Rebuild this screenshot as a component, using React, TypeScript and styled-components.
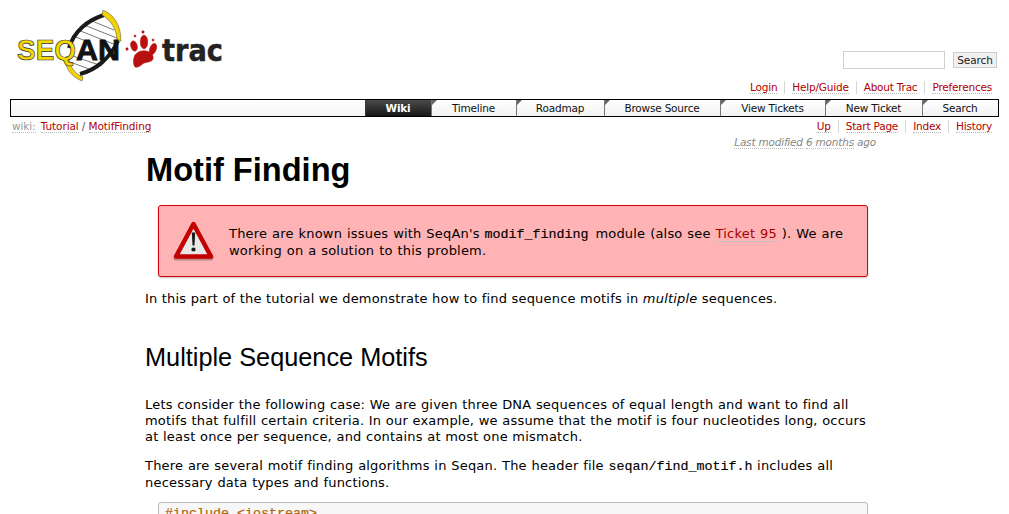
import React, {FC} from "react";
import styled, {createGlobalStyle} from "styled-components";

const GlobalStyle = createGlobalStyle`
  html, body {
    margin: 0;
    height: 514px;
    overflow: hidden;
    background: #fff;
    color: #000;
    font-family: "DejaVu Sans", Verdana, sans-serif;
    font-size: 13px;
  }
`;

const Page = styled.div`
  width: 1009px;
  height: 514px;
  overflow: hidden;
  padding: 0 10px;
  box-sizing: border-box;
`;

const Banner = styled.div`
  display: flex;
  justify-content: space-between;
  height: 51px;
  padding-top: 10px;
  padding-left: 6px;
`;

const SearchRow = styled.form`
  display: flex;
  align-items: center;
  gap: 8px;
  height: 18px;
  margin: 41px 2px 0 0;
`;

const SearchInput = styled.input`
  width: 102px;
  height: 18px;
  box-sizing: border-box;
  border: 1px solid #d0d0d0;
  background: #fff;
  padding: 0;
`;

const SearchButton = styled.button`
  width: 44px;
  height: 16px;
  box-sizing: border-box;
  padding: 0;
  border: 1px solid #ccc;
  background: #f0f0f0;
  color: #222;
  font-family: "DejaVu Sans", Verdana, sans-serif;
  font-size: 10.5px;
  letter-spacing: -0.1px;
  line-height: 14px;
`;

const LinkList = styled.ul`
  display: flex;
  justify-content: flex-end;
  list-style: none;
  margin: 0;
  padding: 0;
  font-size: 10.5px;
  letter-spacing: -0.2px;
  line-height: 13px;
`;

const MetaNav = styled(LinkList)`
  height: 13px;
  margin-top: 20px;
  padding-right: 7px;
`;

const LinkItem = styled.li`
  padding: 0 7px 0 7px;
  border-right: 1px solid #d7d7d7;

  &:last-child {
    border-right: 0;
    padding-right: 0;
  }
`;

const DottedLink = styled.a`
  color: #b00000;
  text-decoration: none;
  border-bottom: 1px dotted #bbb;
`;

const MainNav = styled.nav`
  display: flex;
  justify-content: flex-end;
  height: 18px;
  margin-top: 5px;
  box-sizing: border-box;
  border: 1px solid #000;
  background: linear-gradient(#fff, #f4f4f4);
`;

const Tab = styled.a<{ $width: number; $active?: boolean }>`
  position: relative;
  width: ${(props) => props.$width}px;
  box-sizing: border-box;
  padding-right: 1px;
  text-align: center;
  font-size: 10.5px;
  letter-spacing: -0.2px;
  line-height: 16px;
  color: ${(props) => (props.$active ? "#fff" : "#111")};
  font-weight: ${(props) => (props.$active ? "bold" : "normal")};
  border-left: 1px solid ${(props) => (props.$active ? "#333" : "#777")};
  background: ${(props) => (props.$active ? "linear-gradient(#4a4a4a, #181818)" : "linear-gradient(#fff, #f2f2f2)")};

  &::before {
    content: "";
    display: ${(props) => (props.$active ? "none" : "block")};
    position: absolute;
    top: 0;
    left: 0;
    border-top: 5px solid #666;
    border-right: 5px solid transparent;
  }
`;

const CrumbRow = styled.div`
  display: flex;
  justify-content: space-between;
  height: 13px;
  margin-top: 3px;
  padding: 0 7px 0 2px;
  font-size: 10.5px;
  line-height: 13px;
`;

const Crumbs = styled.div`
  color: #555;
  letter-spacing: -0.1px;
`;

const CrumbLabel = styled.span`
  color: #999;
  margin-right: 2px;
  border-bottom: 1px dotted #bbb;
`;

const LastModified = styled.div`
  height: 13px;
  margin-top: 3px;
  padding-right: 123px;
  text-align: right;
  font-size: 10.5px;
  letter-spacing: -0.2px;
  line-height: 13px;
  font-style: italic;
  color: #888;
`;

const ModifiedLink = styled.span`
  border-bottom: 1px dotted #bbb;
`;

const Content = styled.main`
  width: 727px;
  margin-left: 135px;
  letter-spacing: 0.2px;
`;

const Title = styled.h1`
  margin: 0;
  padding-left: 1px;
  font-family: "Liberation Sans", Arial, sans-serif;
  font-size: 32.6px;
  letter-spacing: 0;
  line-height: 42px;
  font-weight: bold;
`;

const Warning = styled.div`
  display: flex;
  align-items: flex-start;
  width: 710px;
  height: 72px;
  box-sizing: border-box;
  margin: 14px 0 0 13px;
  padding: 15px 0 0 14px;
  border: 1px solid #d8000c;
  border-radius: 3px;
  background: #ffb3b5;
  box-shadow: 0 1px 2px rgba(0, 0, 0, 0.25);
  font-size: 13px;
  line-height: 16px;
`;

const WarningIcon = styled.svg`
  flex: none;
  width: 42px;
  height: 40px;
  margin-right: 14px;
`;

const WarningText = styled.div`
  width: 625px;
  margin-top: 5px;
  word-spacing: 0.5px;
`;

const Mono = styled.code`
  font-family: "Liberation Mono", "Courier New", monospace;
  font-size: 13.33px;
  letter-spacing: 0;
  word-spacing: 0;
  -webkit-text-stroke: 0.15px #000;
`;

const WarningMono = styled(Mono)`
  margin-right: 2px;
`;

const TicketLink = styled.a`
  color: #a80000;
  border-bottom: 1px dotted #bbb;
`;

const Paragraph = styled.p`
  margin: 0;
  line-height: 16px;
`;

const Lead = styled(Paragraph)`
  margin-top: 14px;
`;

const Heading = styled.h2`
  margin: 33px 0 0;
  font-family: "Liberation Sans", Arial, sans-serif;
  font-size: 25.3px;
  letter-spacing: 0;
  line-height: 34px;
  font-weight: normal;
`;

const Body = styled(Paragraph)`
  margin-top: 23px;
  word-spacing: 0.2px;
`;

const Next = styled(Paragraph)`
  margin-top: 13px;
  word-spacing: 0.35px;
`;

const CodeBlock = styled.pre`
  width: 710px;
  height: 40px;
  box-sizing: border-box;
  margin: 11px 0 0 13px;
  padding: 3px 6px;
  border: 1px solid #bbb;
  border-radius: 3px;
  background: #f7f7f7;
  font-family: "Liberation Mono", "Courier New", monospace;
  font-size: 13.33px;
  letter-spacing: 0;
  line-height: 15px;
  color: #b0620a;
  -webkit-text-stroke: 0.2px #b0620a;
`;

const LogoImage = styled.svg`
  flex: none;
  display: block;
`;

// viewBox is in page pixels so the shapes can be read against the screenshot
const Logo: FC = () => (
    <LogoImage width="222" height="72" viewBox="16 10 222 72" role="img" aria-label="SeqAn trac">
        <path d="M103 16 C88 21 74 32 69 47 L68 56 L80 73 C94 70 108 60 118 41 C116 30 112 22 103 16 Z" fill="#fff"/>
        <g stroke="#777" strokeWidth="1">
            <path d="M92 21 L114 30"/>
            <path d="M84 25 L117 38"/>
            <path d="M78 30 L116 45"/>
            <path d="M73 36 L86 41"/>
            <path d="M70 62 L92 70"/>
            <path d="M73 56 L102 66"/>
        </g>
        <path d="M104 15 C88 20 74 31 69 48" fill="none" stroke="#1a1a1a" strokeWidth="4"/>
        <path d="M118 41 C110 58 96 70 80 74" fill="none" stroke="#1a1a1a" strokeWidth="4"/>
        <path d="M103 10 C113 14 121 24 121 41 L117 41 C117 30 111 20 102 15 Z" fill="#f2d200" stroke="#444" strokeWidth="0.5"/>
        <path d="M65 57 C64 68 72 77 82 81 L83 77 C75 74 69 66 69 57 Z" fill="#f2d200" stroke="#444" strokeWidth="0.5"/>
        <text x="17" y="60" fontFamily="Liberation Sans, Arial, sans-serif" fontWeight="bold" fontSize="30" fill="#f5d800" stroke="#333" strokeWidth="0.7" textLength="59" lengthAdjust="spacingAndGlyphs">SEQ</text>
        <text x="76" y="60" fontFamily="Liberation Sans, Arial, sans-serif" fontWeight="bold" fontSize="30" fill="#111" stroke="#111" strokeWidth="0.8" textLength="44" lengthAdjust="spacingAndGlyphs">AN</text>
        <g fill="#b80f0f" stroke="#b80f0f" strokeWidth="0.6">
            <path d="M142 51 C149 50 154 54 153 59 C152 62 147 62 144 63 C142 64 139 68 135 67 C133 64 133 59 135 55 C137 53 139 51 142 51 Z"/>
            <ellipse cx="134" cy="46" rx="3.2" ry="5.2" transform="rotate(-15 134 46)"/>
            <ellipse cx="144" cy="42" rx="3.7" ry="6.8"/>
            <ellipse cx="153" cy="49" rx="3.2" ry="5.8" transform="rotate(20 153 49)"/>
            <circle cx="143" cy="32" r="1.2"/>
            <circle cx="135" cy="36" r="1"/>
            <circle cx="153" cy="40" r="1"/>
            <circle cx="127" cy="49" r="1.2"/>
        </g>
        <text x="162" y="61" fontFamily="DejaVu Sans, Verdana, sans-serif" fontWeight="bold" fontSize="31" fill="#222" stroke="#222" strokeWidth="0.5" textLength="61" lengthAdjust="spacingAndGlyphs">trac</text>
    </LogoImage>
);

const navItems = [
    {label: "Wiki", width: 66, active: true},
    {label: "Timeline", width: 85},
    {label: "Roadmap", width: 88},
    {label: "Browse Source", width: 116},
    {label: "View Tickets", width: 105},
    {label: "New Ticket", width: 97},
    {label: "Search", width: 76},
];

export default function App() {
    return (
        <Page>
            <GlobalStyle/>
            <Banner>
                <Logo/>
                <SearchRow onSubmit={(e) => e.preventDefault()}>
                    <SearchInput type="text"/>
                    <SearchButton type="submit">Search</SearchButton>
                </SearchRow>
            </Banner>
            <MetaNav>
                {["Login", "Help/Guide", "About Trac", "Preferences"].map((label) => (
                    <LinkItem key={label}><DottedLink>{label}</DottedLink></LinkItem>
                ))}
            </MetaNav>
            <MainNav>
                {navItems.map((item) => (
                    <Tab key={item.label} $width={item.width} $active={item.active}>{item.label}</Tab>
                ))}
            </MainNav>
            <CrumbRow>
                <Crumbs>
                    <CrumbLabel>wiki:</CrumbLabel> <DottedLink>Tutorial</DottedLink> / <DottedLink>MotifFinding</DottedLink>
                </Crumbs>
                <LinkList>
                    {["Up", "Start Page", "Index", "History"].map((label) => (
                        <LinkItem key={label}><DottedLink>{label}</DottedLink></LinkItem>
                    ))}
                </LinkList>
            </CrumbRow>
            <LastModified><ModifiedLink>Last modified</ModifiedLink> <ModifiedLink>6 months</ModifiedLink> ago</LastModified>
            <Content>
                <Title>Motif Finding</Title>
                <Warning>
                    <WarningIcon viewBox="0 0 42 40">
                        <path d="M20.5 3 L38 35.5 L3 35.5 Z" fill="#000" opacity="0.25" transform="translate(0 1.5)" stroke="#000" strokeWidth="5" strokeLinejoin="round"/>
                        <path d="M20.5 3 L38 35.5 L3 35.5 Z" fill="#e8e8e8" stroke="#c40000" strokeWidth="4.5" strokeLinejoin="round"/>
                        <path d="M18.8 11.5 h3.4 l-0.7 13 h-2 Z" fill="#1a1a1a"/>
                        <circle cx="20.5" cy="28.5" r="2.1" fill="#1a1a1a"/>
                    </WarningIcon>
                    <WarningText>
                        There are known issues with SeqAn's <WarningMono>modif_finding</WarningMono> module (also see <TicketLink>Ticket 95</TicketLink> ). We are working on a solution to this problem.
                    </WarningText>
                </Warning>
                <Lead>In this part of the tutorial we demonstrate how to find sequence motifs in <em>multiple</em> sequences.</Lead>
                <Heading>Multiple Sequence Motifs</Heading>
                <Body>Lets consider the following case: We are given three DNA sequences of equal length and want to find all motifs that fulfill certain criteria. In our example, we assume that the motif is four nucleotides long, occurs at least once per sequence, and contains at most one mismatch.</Body>
                <Next>There are several motif finding algorithms in Seqan. The header file <Mono>seqan/find_motif.h</Mono> includes all necessary data types and functions.</Next>
                <CodeBlock>#include &lt;iostream&gt;</CodeBlock>
            </Content>
        </Page>
    );
}
